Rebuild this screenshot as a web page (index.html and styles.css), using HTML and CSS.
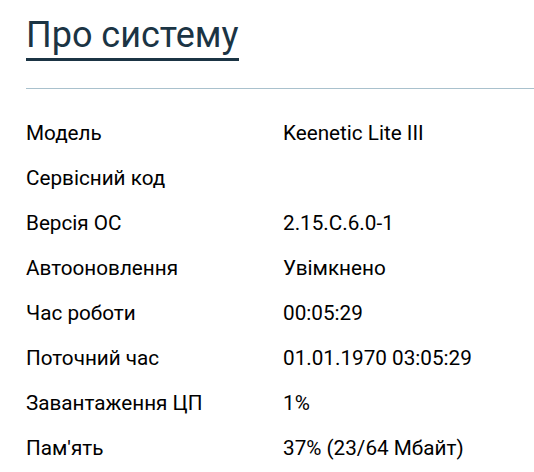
FILE: index.html
```html
<!DOCTYPE html>
<html lang="uk">
<head>
<meta charset="utf-8">
<title>Про систему</title>
<link rel="stylesheet" href="styles.css">
</head>
<body>
<div class="page">
  <h1 class="title">Про систему</h1>
  <div class="divider"></div>
  <div class="info">
    <div class="row"><span class="label">Модель</span><span class="value">Keenetic Lite III</span></div>
    <div class="row"><span class="label">Сервісний код</span><span class="value hidden"></span></div>
    <div class="row"><span class="label">Версія ОС</span><span class="value">2.15.C.6.0-1</span></div>
    <div class="row"><span class="label">Автооновлення</span><span class="value">Увімкнено</span></div>
    <div class="row"><span class="label">Час роботи</span><span class="value">00:05:29</span></div>
    <div class="row"><span class="label">Поточний час</span><span class="value">01.01.1970 03:05:29</span></div>
    <div class="row"><span class="label">Завантаження ЦП</span><span class="value">1%</span></div>
    <div class="row"><span class="label">Пам'ять</span><span class="value">37% (23/64 Мбайт)</span></div>
  </div>
</div>
</body>
</html>
```
FILE: styles.css
```css
html, body {
  margin: 0;
  padding: 0;
  background: #ffffff;
}
.page {
  padding: 17px 0 0 26px;
  font-family: Roboto, "Liberation Sans", sans-serif;
  color: #000000;
  overflow: hidden;
}
.title {
  display: inline-block;
  margin: 0;
  font-size: 36px;
  font-weight: 400;
  line-height: 36px;
  color: #1b3444;
  padding-bottom: 5px;
  border-bottom: 3px solid #1b3444;
}
.divider {
  margin-top: 27px;
  height: 1px;
  background: #a9c1cd;
}
.info {
  margin-top: 22px;
  display: grid;
  grid-template-columns: 257px 1fr;
}
.row {
  display: contents;
}
.label, .value {
  font-size: 20.7px;
  line-height: 45px;
  height: 45px;
  white-space: nowrap;
}
```
